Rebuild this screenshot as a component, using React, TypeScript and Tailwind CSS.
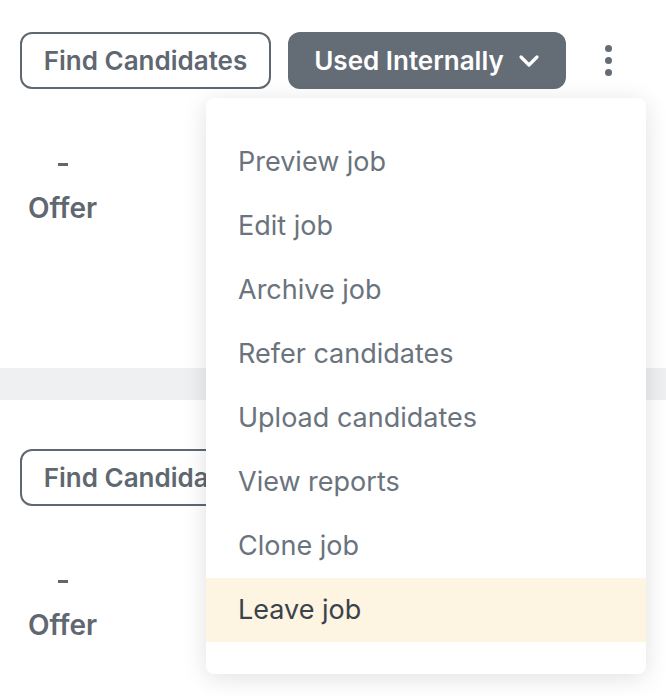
import React from "react";

const font = { fontFamily: "Inter, 'Noto Sans', sans-serif" };

function Card({ top }: { top: number }) {
  return (
    <div className="bg-white">
      <div className="flex items-center gap-[17px] pl-[20px]" style={{ paddingTop: top }}>
        <button className="h-[57px] w-[251px] rounded-[12px] border-2 border-[#5f6770] text-[26px] font-semibold text-[#5f6770] flex items-center justify-center">
          Find Candidates
        </button>
        <button className="h-[57px] w-[278px] rounded-[12px] bg-[#646c76] text-[26px] font-semibold text-white flex items-center justify-center gap-[14px]">
          <span>Used Internally</span>
          <svg width="22" height="14" viewBox="0 0 22 14" fill="none">
            <path d="M3 3 L11 11 L19 3" stroke="white" strokeWidth="3.2" strokeLinecap="round" strokeLinejoin="round" />
          </svg>
        </button>
        <div className="ml-[22px] flex flex-col gap-[5px]">
          <span className="block h-[7px] w-[7px] rounded-full bg-[#646c76]" />
          <span className="block h-[7px] w-[7px] rounded-full bg-[#646c76]" />
          <span className="block h-[7px] w-[7px] rounded-full bg-[#646c76]" />
        </div>
      </div>
      <div className="mt-[53px] ml-[28px] flex w-[69px] flex-col items-center">
        <div className="flex h-[44px] items-center">
          <span className="block h-[3px] w-[10px] bg-[#5f6770]" />
        </div>
        <div className="text-[28px] font-semibold leading-[44px] text-[#5f6770]">Offer</div>
      </div>
    </div>
  );
}

const items = [
  "Preview job",
  "Edit job",
  "Archive job",
  "Refer candidates",
  "Upload candidates",
  "View reports",
  "Clone job",
  "Leave job",
];

export default function App() {
  return (
    <div className="relative h-[696px] w-[666px] overflow-hidden bg-[#eef0f2]" style={font}>
      <div className="h-[368px] bg-white">
        <Card top={32} />
      </div>
      <div className="mt-[32px] h-[296px] bg-white">
        <Card top={49} />
      </div>
      <div className="absolute left-[206px] top-[98px] w-[440px] rounded-[8px] bg-white py-[32px] shadow-[0_4px_24px_rgba(0,0,0,0.12)]">
        {items.map((it) => (
          <div
            key={it}
            className={
              it === "Leave job"
                ? "flex h-[64px] items-center bg-[#fdf4e1] pl-[32px] text-[27px] text-[#3a424b]"
                : "flex h-[64px] items-center pl-[32px] text-[27px] text-[#6b737d]"
            }
          >
            {it}
          </div>
        ))}
      </div>
    </div>
  );
}
